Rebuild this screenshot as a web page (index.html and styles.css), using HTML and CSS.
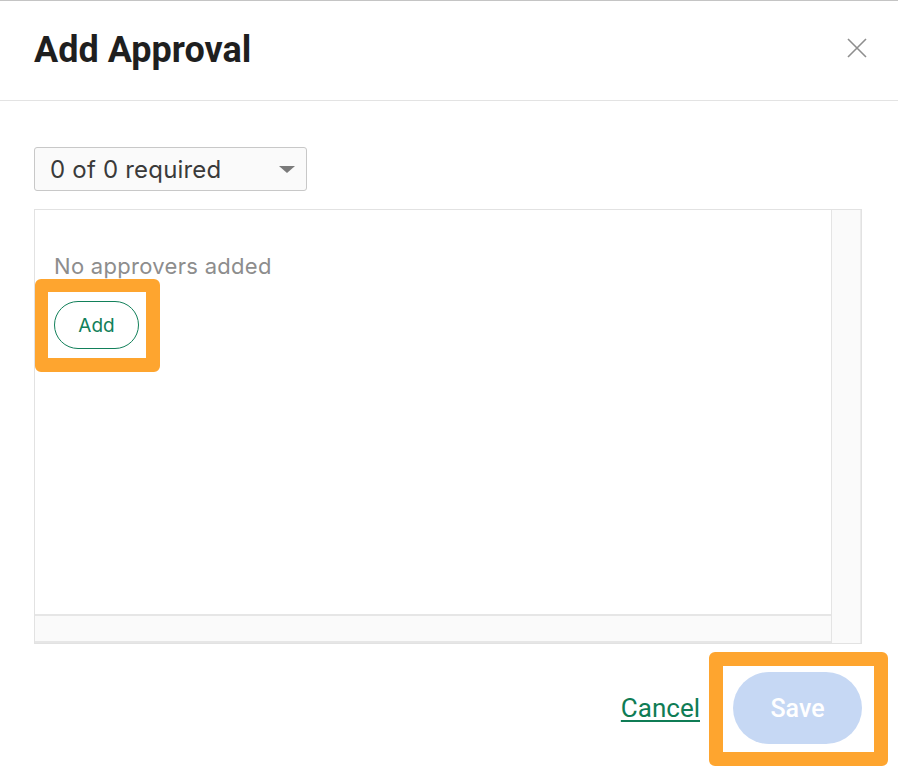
FILE: index.html
```html
<!DOCTYPE html>
<html>
<head>
<meta charset="utf-8">
<link rel="stylesheet" href="styles.css">
</head>
<body>
<div class="modal">
  <header class="modal-header">
    <h1 class="title">Add Approval</h1>
    <button class="close" aria-label="Close">
      <svg width="20" height="20" viewBox="0 0 20 20"><path d="M1 1L19 19M19 1L1 19" stroke="#8e8e8e" stroke-width="1.6" fill="none"/></svg>
    </button>
  </header>
  <main class="modal-body">
    <div class="select">
      <span class="select-text">0 of 0 required</span>
      <span class="caret"></span>
    </div>
    <div class="scrollbox">
      <div class="scroll-content">
        <p class="empty">No approvers added</p>
        <button class="add-btn">Add</button>
      </div>
      <div class="vtrack"></div>
      <div class="htrack"></div>
    </div>
  </main>
  <footer class="modal-footer">
    <a class="cancel" href="#">Cancel</a>
    <button class="save">Save</button>
  </footer>
</div>
<div class="highlight hl-add"></div>
<div class="highlight hl-save"></div>
</body>
</html>
```
FILE: styles.css
```css
html, body {
  margin: 0;
  padding: 0;
  background: #ffffff;
}
body {
  width: 898px;
  height: 776px;
  position: relative;
  overflow: hidden;
  font-family: "Inter", "Roboto", sans-serif;
}
.modal {
  border-top: 1px solid #c4c4c4;
}
.modal-header {
  height: 99px;
  border-bottom: 1px solid #e3e3e3;
  display: flex;
  align-items: center;
  justify-content: space-between;
  padding: 0 31px 0 34px;
}
.title {
  margin: 0;
  font-family: "Roboto", sans-serif;
  font-weight: 700;
  font-size: 36px;
  color: #1f1f1f;
  letter-spacing: 0;
  padding-bottom: 1px;
}
.close {
  border: 0;
  background: none;
  padding: 0;
  width: 20px;
  height: 20px;
  margin-top: -6px;
}
.modal-body {
  padding: 46px 36px 0 34px;
}
.select {
  height: 42px;
  border: 1px solid #c8c8c8;
  border-radius: 3px;
  background: #fafafa;
  display: flex;
  align-items: center;
  justify-content: space-between;
  padding: 0 11px 0 15px;
  box-sizing: content-box;
  width: 245px;
}
.select-text {
  font-size: 24px;
  color: #3a3a3a;
  letter-spacing: 0.2px;
}
.caret {
  width: 0;
  height: 0;
  border-left: 8px solid transparent;
  border-right: 8px solid transparent;
  border-top: 7px solid #7a7a7a;
  margin-top: 1px;
}
.scrollbox {
  margin-top: 18px;
  width: 826px;
  height: 433px;
  border: 1px solid #e2e2e2;
  display: grid;
  grid-template-columns: 796px 30px;
  grid-template-rows: 404px 29px;
}
.scroll-content {
  padding: 41px 0 0 19px;
}
.empty {
  margin: 0;
  font-size: 22px;
  color: #8d8d8d;
  letter-spacing: 0.3px;
  line-height: 30px;
}
.add-btn {
  margin-top: 20px;
  width: 85px;
  height: 48px;
  border: 1px solid #12805a;
  border-radius: 24px;
  background: #fff;
  color: #12805a;
  font-family: "Inter", sans-serif;
  font-size: 19px;
  padding: 0;
  display: block;
}
.vtrack {
  background: #fafafa;
  border-left: 1px solid #e4e4e4;
  border-right: 1px solid #ececec;
  grid-row: 1 / 3;
  grid-column: 2;
}
.htrack {
  background: #fafafa;
  border-top: 2px solid #e6e6e6;
  border-bottom: 2px solid #e6e6e6;
  grid-row: 2;
  grid-column: 1;
}
.modal-footer {
  display: flex;
  justify-content: flex-end;
  align-items: center;
  gap: 33px;
  padding: 28px 36px 0 0;
}
.cancel {
  font-family: "Roboto", sans-serif;
  font-size: 26px;
  color: #0f7c55;
  text-decoration: underline;
  text-decoration-thickness: 2px;
  text-underline-offset: 3px;
}
.save {
  width: 129px;
  height: 72px;
  border: 0;
  border-radius: 36px;
  background: #c6d8f4;
  color: #ffffff;
  font-family: "Roboto", sans-serif;
  font-weight: 500;
  font-size: 25px;
  padding: 0;
}
.highlight {
  position: absolute;
  border-style: solid;
  border-color: #fea52f;
  border-radius: 6px;
  box-sizing: border-box;
}
.hl-add {
  left: 35px;
  top: 279px;
  width: 125px;
  height: 93px;
  border-width: 13px 14px 14px 13px;
}
.hl-save {
  left: 709px;
  top: 652px;
  width: 179px;
  height: 114px;
  border-width: 14px;
}
```
